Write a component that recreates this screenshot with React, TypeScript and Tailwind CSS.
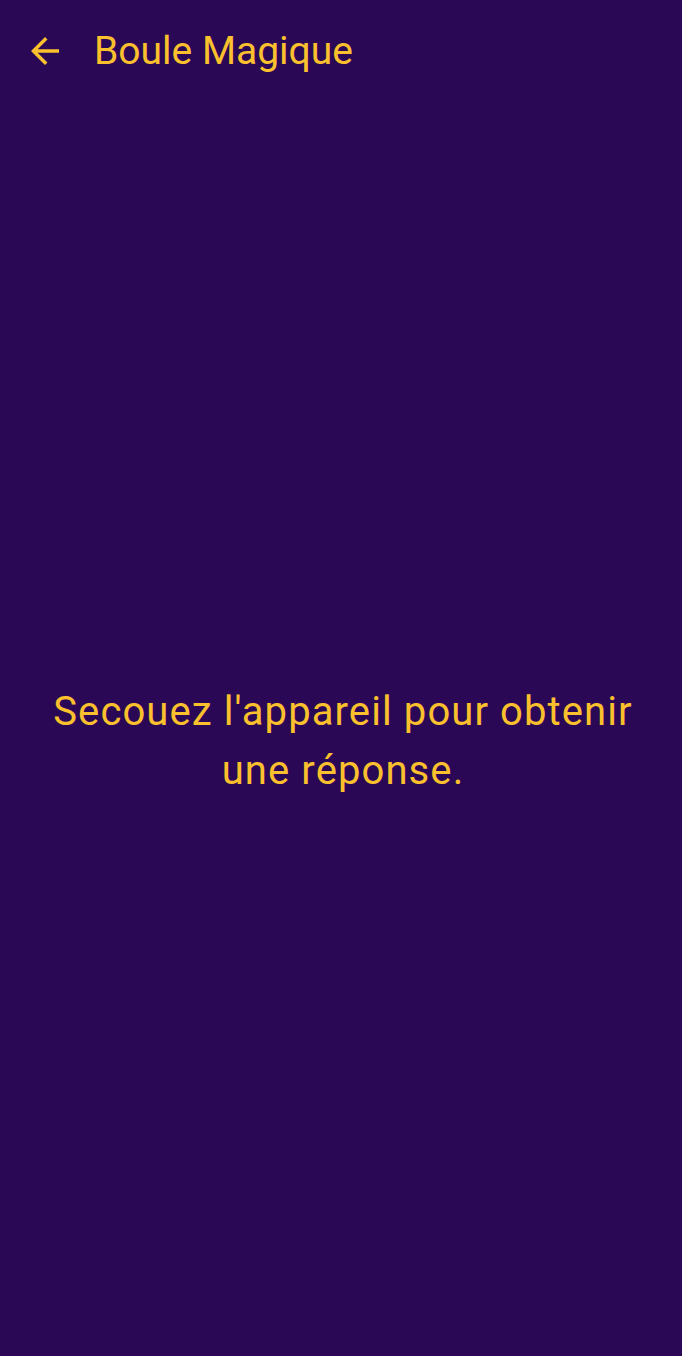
export default function App() {
  return (
    <div
      className="flex flex-col h-[1356px] w-full bg-[#2a0856] text-[#fbc02d]"
      style={{ fontFamily: 'Roboto, "Noto Sans", sans-serif' }}
    >
      <header className="flex items-center h-[102px] pl-[24px]">
        <svg width="42" height="42" viewBox="0 0 24 24" fill="currentColor" className="shrink-0">
          <path d="M20 11H7.83l5.59-5.59L12 4l-8 8 8 8 1.41-1.41L7.83 13H20v-2z" />
        </svg>
        <h1 className="ml-[28px] text-[39px] leading-none">Boule Magique</h1>
      </header>
      <main className="flex-1 flex items-center justify-center pl-[44px] pr-[40px] pt-[24px]">
        <p className="text-center text-[40px] leading-[59px] tracking-[1.1px]">
          Secouez l'appareil pour obtenir une réponse.
        </p>
      </main>
    </div>
  )
}
